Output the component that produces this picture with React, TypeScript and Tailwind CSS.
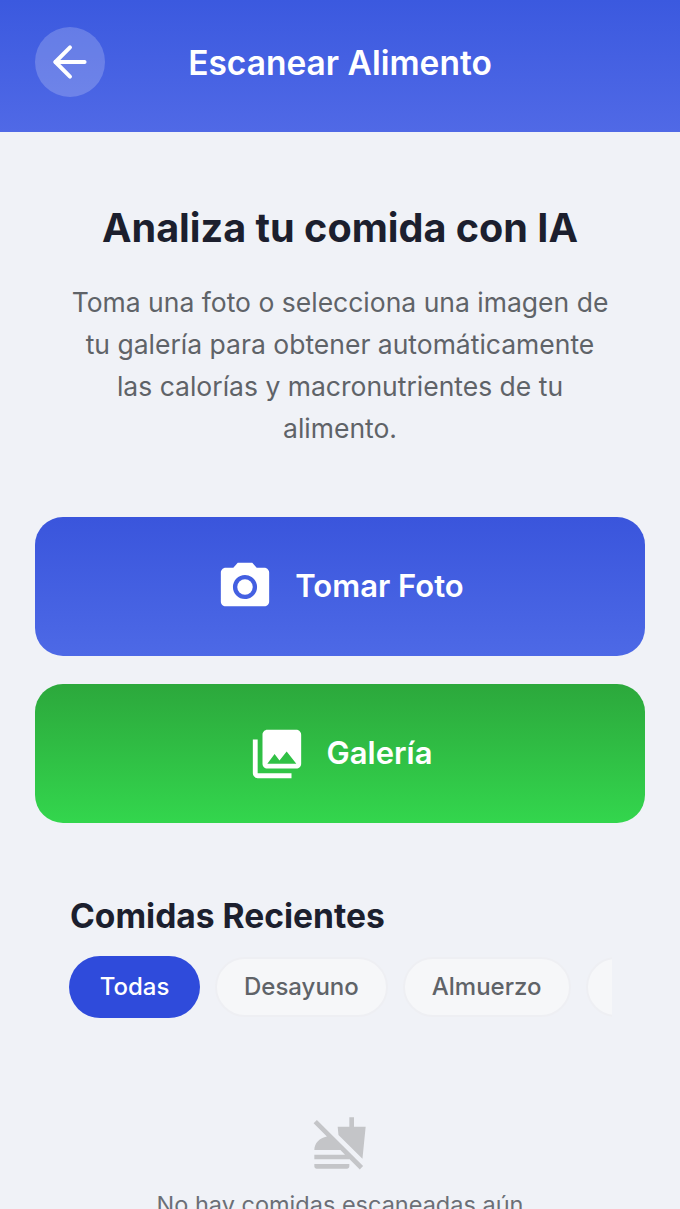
import { ArrowLeft } from "lucide-react";
import { MdNoFood, MdPhotoCamera, MdPhotoLibrary } from "react-icons/md";

const chips = ["Desayuno", "Almuerzo"];

export default function App() {
  return (
    <div className="h-[1209px] overflow-hidden bg-[#f0f2f7] font-['Inter',sans-serif]">
      <header className="relative flex h-[132px] items-center justify-center bg-gradient-to-b from-[#3b59df] to-[#5069e6] pb-[6px]">
        <button className="absolute left-[35px] top-[27px] flex h-[70px] w-[70px] items-center justify-center rounded-full bg-white/20">
          <ArrowLeft size={50} strokeWidth={1.9} className="text-white" />
        </button>
        <h1 className="text-[33.5px] font-semibold text-white">Escanear Alimento</h1>
      </header>

      <main className="px-[35px]">
        <section className="px-[35px] pt-[71px] text-center">
          <h2 className="whitespace-nowrap text-[39.6px] font-bold leading-[50px] text-[#1c1f2e]">Analiza tu comida con IA</h2>
          <p className="mt-[28px] text-[26.5px] leading-[42px] text-[#5f6368]">
            Toma una foto o selecciona una imagen de tu galería para obtener automáticamente las calorías y macronutrientes de tu alimento.
          </p>
        </section>

        <div className="mt-[68px] flex flex-col gap-[28px]">
          <button className="flex h-[139px] items-center justify-center gap-[21px] rounded-[28px] bg-gradient-to-b from-[#3a55dc] to-[#4d69e6] text-[31px] font-semibold text-white">
            <MdPhotoCamera size={58} />
            Tomar Foto
          </button>
          <button className="flex h-[139px] items-center justify-center gap-[21px] rounded-[28px] bg-gradient-to-b from-[#2ca83c] to-[#33d64d] text-[31px] font-semibold text-white">
            <MdPhotoLibrary size={58} />
            Galería
          </button>
        </div>

        <section className="px-[35px] pt-[72px]">
          <h3 className="text-[33.6px] font-bold leading-[42px] text-[#1c1f2e]">Comidas Recientes</h3>
          <div className="-ml-px -mr-[2px] mt-[19px] flex items-center gap-[15px] overflow-hidden">
            <span className="flex h-[62px] w-[131px] shrink-0 items-center justify-center rounded-full bg-[#2f4bdb] text-[24px] font-medium text-white">Todas</span>
            {chips.map((chip) => (
              <span key={chip} className="flex h-[60px] shrink-0 items-center justify-center rounded-full border-2 border-[#eeeff3] bg-[#f6f7f9] px-[27px] text-[24px] font-medium text-[#5f6368]">
                {chip}
              </span>
            ))}
            <span className="h-[60px] w-[80px] shrink-0 rounded-full border-2 border-[#eeeff3] bg-[#f6f7f9]" />
          </div>
        </section>

        <section className="flex flex-col items-center pt-[97px]">
          <MdNoFood size={56} className="text-[#c4c5c8]" />
          <p className="mt-[16px] text-[23.5px] text-[#6b6f76]">No hay comidas escaneadas aún</p>
        </section>
      </main>
    </div>
  );
}
